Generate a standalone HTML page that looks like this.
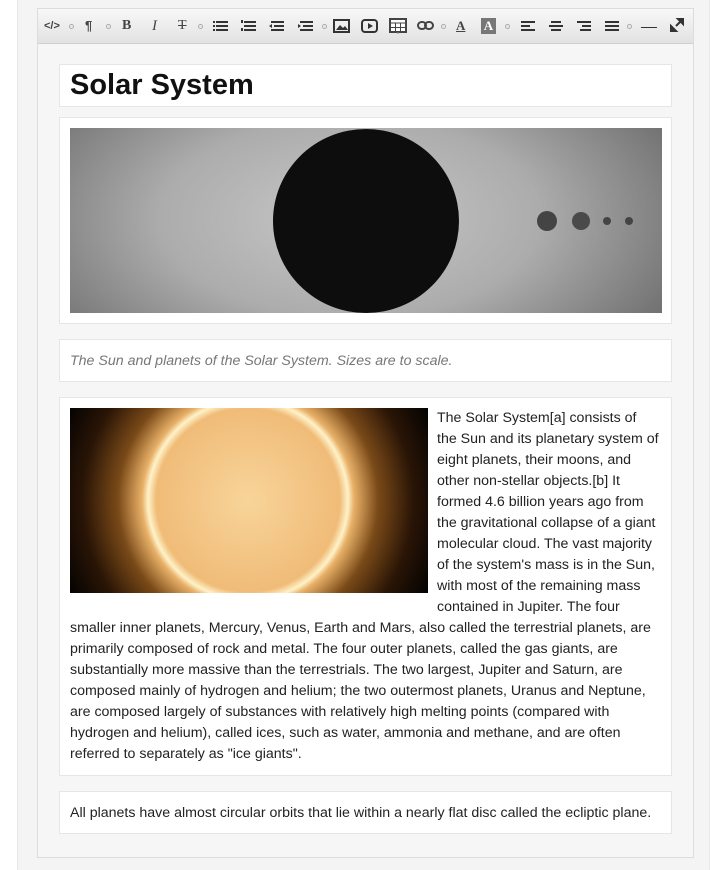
<!DOCTYPE html>
<html><head><meta charset="utf-8">
<style>
*{box-sizing:border-box;margin:0;padding:0}
body{width:727px;height:870px;background:#fff;font-family:"Liberation Sans",sans-serif;position:relative;overflow:hidden}
.panel{position:absolute;left:17px;top:0;width:693px;height:870px;background:#f4f4f4;border-left:1px solid #e8e8e8;border-right:1px solid #e8e8e8}
.ed{position:absolute;left:37px;top:8px;width:657px;height:850px;border:1px solid #dcdcdc;background:#f6f6f6}
.tb{position:absolute;left:0;top:0;width:655px;height:35px;background:linear-gradient(#f8f8f8,#e2e2e2);border-bottom:1px solid #cfcfcf}
.tb span{position:absolute;top:9px;color:#444;font-size:13px;line-height:16px}
.tb svg{position:absolute;top:10px}
.dot{width:5px;height:5px;border:1px solid #aaa;border-radius:50%;top:15px!important}
.blk{position:absolute;left:21px;width:613px;background:#fff;border:1px solid #e6e6e6}
p{font-size:14.2px;line-height:21px;color:#222}
</style></head><body>
<div class="panel"></div>
<div class="ed">
<div class="tb">
<span style="left:6px;font-weight:bold;font-size:11px">&lt;/&gt;</span><span class="dot" style="left:31px"></span>
<span style="left:47px;font-weight:bold">¶</span><span class="dot" style="left:68px"></span>
<span style="left:84px;font-family:'Liberation Serif';font-weight:bold;font-size:14px">B</span>
<span style="left:114px;font-family:'Liberation Serif';font-style:italic;font-size:15px">I</span>
<span style="left:140px;font-family:'Liberation Serif';text-decoration:line-through;font-size:14px">T</span><span class="dot" style="left:160px"></span>
<svg style="left:175px" width="15" height="14"><g fill="#333"><rect x="0" y="2" width="2" height="2"/><rect x="3" y="2" width="12" height="2"/><rect x="0" y="6" width="2" height="2"/><rect x="3" y="6" width="12" height="2"/><rect x="0" y="10" width="2" height="2"/><rect x="3" y="10" width="12" height="2"/></g></svg>
<svg style="left:203px" width="15" height="14"><g fill="#333"><rect x="0" y="1" width="2" height="3"/><rect x="3" y="2" width="12" height="2"/><rect x="3" y="6" width="12" height="2"/><rect x="0" y="9" width="2" height="3"/><rect x="3" y="10" width="12" height="2"/></g></svg>
<svg style="left:231px" width="15" height="14"><g fill="#333"><rect x="2" y="2" width="13" height="2"/><rect x="5" y="6" width="10" height="2"/><rect x="2" y="10" width="13" height="2"/><path d="M0 7l3-2v4z"/></g></svg>
<svg style="left:260px" width="15" height="14"><g fill="#333"><rect x="2" y="2" width="13" height="2"/><rect x="5" y="6" width="10" height="2"/><rect x="2" y="10" width="13" height="2"/><path d="M0 5l3 2-3 2z"/></g></svg>
<span class="dot" style="left:284px"></span>
<svg style="left:295px;top:10px" width="17" height="14"><rect x="1" y="1" width="15" height="12" fill="none" stroke="#333" stroke-width="2"/><path d="M3 11l4-5 3 3 2-2 3 4z" fill="#333"/></svg>
<svg style="left:323px;top:10px" width="17" height="14"><rect x="1" y="1" width="15" height="12" rx="3" fill="none" stroke="#333" stroke-width="2"/><path d="M7 4l5 3-5 3z" fill="#333"/></svg>
<svg style="left:351px;top:9px" width="18" height="16"><rect x="1" y="1" width="16" height="13" fill="#fff" stroke="#444" stroke-width="2"/><path d="M1 5h16M1 9.5h16M6.5 5v9M11.5 5v9" stroke="#444"/><path d="M8 15h2" stroke="#888"/></svg>
<svg style="left:379px;top:11px" width="17" height="12"><rect x="1" y="2" width="8" height="7" rx="3.5" fill="none" stroke="#444" stroke-width="2"/><rect x="8" y="2" width="8" height="7" rx="3.5" fill="none" stroke="#444" stroke-width="2"/></svg>
<span class="dot" style="left:403px"></span>
<span style="left:418px;font-family:'Liberation Serif';font-weight:bold;text-decoration:underline">A</span>
<span style="left:443px;background:#777;color:#fff;font-family:'Liberation Serif';font-weight:bold;width:15px;text-align:center">A</span><span class="dot" style="left:467px"></span>
<svg style="left:483px" width="14" height="14"><g fill="#333"><rect x="0" y="2" width="14" height="2"/><rect x="0" y="6" width="9" height="2"/><rect x="0" y="10" width="14" height="2"/></g></svg>
<svg style="left:511px" width="14" height="14"><g fill="#333"><rect x="2" y="2" width="10" height="2"/><rect x="0" y="6" width="14" height="2"/><rect x="2" y="10" width="10" height="2"/></g></svg>
<svg style="left:539px" width="14" height="14"><g fill="#333"><rect x="0" y="2" width="14" height="2"/><rect x="5" y="6" width="9" height="2"/><rect x="3" y="10" width="11" height="2"/></g></svg>
<svg style="left:567px" width="14" height="14"><g fill="#333"><rect x="0" y="2" width="14" height="2"/><rect x="0" y="6" width="14" height="2"/><rect x="0" y="10" width="14" height="2"/></g></svg>
<span class="dot" style="left:589px"></span>
<span style="left:603px;width:16px;height:1px;background:#333;top:18px"></span>
<svg style="left:632px;top:9px" width="14" height="14"><path d="M8 1h5v5zM1 13V8l5 5z M6 8l5-5" fill="#333" stroke="#333" stroke-width="2"/></svg>
</div>
</div>
<div style="position:absolute;left:38px;top:52px">
<div class="blk" style="top:12px;height:43px"><div style="position:absolute;left:10px;top:4px;font-size:29px;font-weight:bold;color:#111">Solar System</div></div>
<div class="blk" style="top:65px;height:207px">
<div style="position:absolute;left:10px;top:10px;width:592px;height:185px;background:radial-gradient(ellipse 380px 200px at 280px 90px,#c8c8c8,#acacac 50%,#6a6a6a);overflow:hidden">
<div style="position:absolute;left:203px;top:1px;width:186px;height:184px;border-radius:50%;background:radial-gradient(#0d0d0d 80%,#222)"></div>
<div style="position:absolute;left:467px;top:83px;width:20px;height:20px;border-radius:50%;background:#444"></div>
<div style="position:absolute;left:502px;top:84px;width:18px;height:18px;border-radius:50%;background:#4a4a4a"></div>
<div style="position:absolute;left:533px;top:89px;width:8px;height:8px;border-radius:50%;background:#444"></div>
<div style="position:absolute;left:555px;top:89px;width:8px;height:8px;border-radius:50%;background:#444"></div>
</div></div>
<div class="blk" style="top:287px;height:43px"><p style="position:absolute;left:10px;top:11px;font-style:italic;color:#777">The Sun and planets of the Solar System. Sizes are to scale.</p></div>
<div class="blk" style="top:345px;height:379px;padding:10px 10px 10px 10px">
<div style="float:left;width:358px;height:185px;margin:0 9px 12px 0;background:#050302;position:relative;overflow:hidden">
<div style="position:absolute;left:-20px;top:-60px;width:400px;height:300px;background:radial-gradient(circle at 198px 152px,#f8d49a 0,#f0bc78 92px,#fff2c8 100px,#e8b068 106px,#7a4a18 130px,#2a1506 165px,#050302 200px)"></div>
</div>
<p>The Solar System[a] consists of<br>the Sun and its planetary system of eight planets, their moons, and other non-stellar objects.[b] It formed 4.6 billion years ago from the gravitational collapse of a giant molecular cloud. The vast majority of the system's mass is in the Sun, with most of the remaining mass contained in Jupiter. The four smaller inner planets, Mercury, Venus, Earth and Mars, also called the terrestrial planets, are primarily composed of rock and metal. The four outer planets, called the gas giants, are substantially more massive than the terrestrials. The two largest, Jupiter and Saturn, are composed mainly of hydrogen and helium; the two outermost planets, Uranus and Neptune, are composed largely of substances with relatively high melting points (compared with hydrogen and helium), called ices, such as water, ammonia and methane, and are often referred to separately as "ice giants".</p>
</div>
<div class="blk" style="top:739px;height:43px"><p style="position:absolute;left:10px;top:11px">All planets have almost circular orbits that lie within a nearly flat disc called the ecliptic plane.</p></div>
</div>
</body></html>
